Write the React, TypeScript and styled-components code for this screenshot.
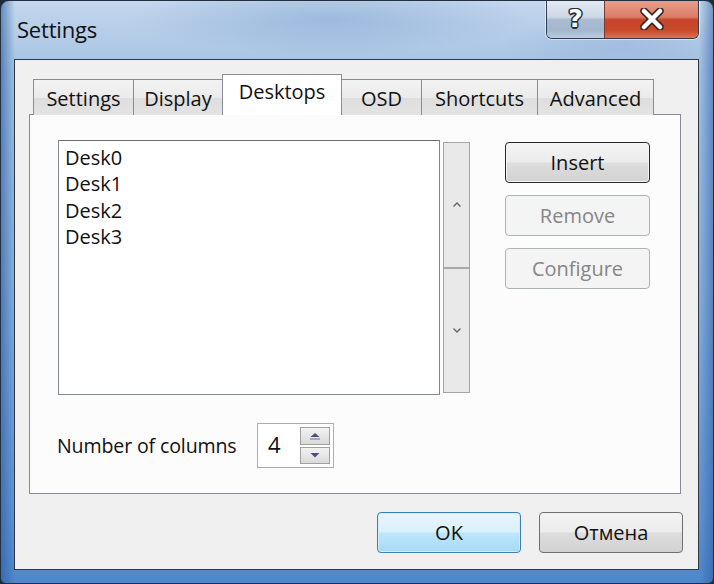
import React from "react";
import styled, { createGlobalStyle, css } from "styled-components";

const GlobalStyle = createGlobalStyle`
  html, body {
    margin: 0;
    padding: 0;
    background: #1d2a3a;
    overflow: hidden;
  }
  * {
    box-sizing: border-box;
  }
`;

const font = `"Open Sans", "Noto Sans", "DejaVu Sans", sans-serif`;

const Frame = styled.div`
  width: 714px;
  height: 584px;
  display: flex;
  flex-direction: column;
  border: 1px solid #23303f;
  border-radius: 9px 9px 6px 6px;
  overflow: hidden;
  background:
    linear-gradient(90deg, rgba(40, 90, 160, 0.6) 0px, rgba(255, 255, 255, 0) 14px,
      rgba(255, 255, 255, 0) 698px, rgba(40, 90, 160, 0.6) 714px),
    linear-gradient(180deg, #c3d7ed 0px, #b2cbe7 40px, #a3c1e4 70px, #86aedd 300px, #5f93d3 520px, #4f86cb 584px);
  font-family: ${font};
`;

const TitleBar = styled.div`
  height: 58px;
  flex: none;
  display: flex;
  justify-content: space-between;
  align-items: flex-start;
  padding-left: 16px;
  padding-right: 14px;
  background:
    radial-gradient(ellipse 200px 36px at 330px 18px, rgba(100, 140, 195, 0.35), rgba(255, 255, 255, 0)),
    radial-gradient(ellipse 120px 30px at 620px 45px, rgba(120, 150, 200, 0.25), rgba(255, 255, 255, 0));
`;

const Title = styled.div`
  padding-top: 13px;
  font-size: 22px;
  color: #111;
  letter-spacing: -0.2px;
`;

const Controls = styled.div`
  display: flex;
  margin-top: -1px;
  border: 1px solid #2f3d4e;
  border-top: none;
  border-radius: 0 0 6px 6px;
  overflow: hidden;
  box-shadow: 0 0 0 1px rgba(255, 255, 255, 0.5);
`;

const CaptionButton = styled.div<{ $close?: boolean }>`
  height: 38px;
  display: flex;
  align-items: center;
  justify-content: center;
  ${(p) =>
    p.$close
      ? css`
          width: 94px;
          background: linear-gradient(180deg, #e7a190 0%, #db7c66 45%, #c7432a 52%, #c84a2c 80%, #dc7351 100%);
          border-left: 1px solid #7a3a30;
        `
      : css`
          width: 57px;
          background: linear-gradient(180deg, #e3eaf2 0%, #cdd8e5 45%, #a9bbd0 52%, #a3b7cf 80%, #bccde0 100%);
        `}
`;

const HelpGlyph = styled.span`
  font-family: "DejaVu Sans", sans-serif;
  font-weight: bold;
  font-size: 25px;
  line-height: 1;
  margin-top: -2px;
  color: #fff;
  text-shadow: -1.5px 0 #27303c, 1.5px 0 #27303c, 0 -1.5px #27303c, 0 1.5px #27303c,
    1px 1px #27303c, -1px -1px #27303c, 1px -1px #27303c, -1px 1px #27303c;
`;

const Client = styled.div`
  flex: none;
  height: 511px;
  margin: 0 14px 0 13px;
  background: #f0f0f0;
  border: 1px solid #2d3846;
  padding: 14px 17px 0 14px;
  display: flex;
  flex-direction: column;
`;

const TabRow = styled.div`
  display: flex;
  align-items: flex-end;
  padding-left: 5px;
  height: 41px;
  position: relative;
  z-index: 1;
`;

const Tab = styled.div<{ $active?: boolean; $w: number }>`
  width: ${(p) => p.$w}px;
  font-size: 20px;
  color: #111;
  display: flex;
  justify-content: center;
  border: 1px solid #898c95;
  border-bottom: none;
  margin-left: -1px;
  ${(p) =>
    p.$active
      ? css`
          height: 41px;
          background: #fff;
          padding-top: 3px;
          position: relative;
          z-index: 2;
        `
      : css`
          height: 36px;
          background: linear-gradient(180deg, #f3f3f3 0%, #ebebeb 50%, #dedede 51%, #e3e3e3 100%);
          padding-top: 5px;
        `}
`;

const Panel = styled.div`
  height: 380px;
  margin-top: -1px;
  background: #fcfcfc;
  border: 1px solid #898c95;
  padding: 25px 0 0 28px;
  display: flex;
  flex-direction: column;
`;

const TopArea = styled.div`
  display: flex;
  align-items: flex-start;
`;

const ListBox = styled.div`
  width: 382px;
  height: 255px;
  background: #fff;
  border: 1px solid #828790;
  border-top-color: #6e6e6e;
  padding: 4px 6px;
  display: flex;
  flex-direction: column;
`;

const ListItem = styled.div`
  font-size: 20px;
  line-height: 26.3px;
  color: #111;
`;

const VScroll = styled.div`
  width: 27px;
  height: 251px;
  margin: 2px 0 0 3px;
  border: 1px solid #a4a4a4;
  display: flex;
  flex-direction: column;
`;

const VScrollHalf = styled.div<{ $bottom?: boolean }>`
  flex: 1;
  background: #e9e9e9;
  display: flex;
  align-items: center;
  justify-content: center;
  ${(p) => p.$bottom && css`border-top: 2px solid #a9a9a9;`}
`;

const ButtonColumn = styled.div`
  margin: 2px 0 0 35px;
  display: flex;
  flex-direction: column;
  gap: 12px;
`;

const PushButton = styled.div<{ $variant?: "default" | "disabled" | "focus"; $w?: number }>`
  width: ${(p) => p.$w ?? 145}px;
  height: 41px;
  border-radius: 4px;
  display: flex;
  align-items: center;
  justify-content: center;
  font-size: 20px;
  color: #111;
  border: 1px solid #707070;
  background: linear-gradient(180deg, #f4f4f4 0%, #ececec 48%, #dddddd 52%, #d2d2d2 100%);
  ${(p) =>
    p.$variant === "default" &&
    css`
      border-color: #262626;
      box-shadow: inset 0 0 0 1px #f6f6f6;
    `}
  ${(p) =>
    p.$variant === "disabled" &&
    css`
      color: #868686;
      border-color: #adb2b5;
      background: #f4f4f4;
    `}
  ${(p) =>
    p.$variant === "focus" &&
    css`
      border-color: #3c7fb1;
      background: linear-gradient(180deg, #eaf6fd 0%, #d9f0fc 48%, #bee6fd 52%, #a7d9f5 100%);
      box-shadow: inset 0 0 0 1px #d4ecf8;
    `}
`;

const ColumnsRow = styled.div`
  display: flex;
  align-items: center;
  margin-top: 28px;
  margin-left: -1px;
`;

const Label = styled.span`
  font-size: 19.6px;
  letter-spacing: -0.15px;
  color: #111;
  width: 200px;
`;

const SpinBox = styled.div`
  width: 77px;
  height: 45px;
  background: #fff;
  border: 1px solid #abadb3;
  display: flex;
  justify-content: space-between;
  padding: 3px 3px 3px 10px;
`;

const SpinValue = styled.span`
  font-size: 22px;
  line-height: 34px;
  color: #111;
`;

const SpinButtons = styled.div`
  width: 30px;
  display: flex;
  flex-direction: column;
  gap: 2px;
`;

const SpinButton = styled.div`
  flex: 1;
  border: 1px solid #a0a0a0;
  background: linear-gradient(180deg, #f2f2f2 0%, #e6e6e6 50%, #d9d9d9 100%);
  display: flex;
  align-items: center;
  justify-content: center;
`;

const Footer = styled.div`
  display: flex;
  justify-content: flex-end;
  gap: 18px;
  margin-top: 18px;
  margin-right: -2px;
`;

const Arrow = ({ up, color = "#555", w = 8 }: { up?: boolean; color?: string; w?: number }) => (
  <svg width={w} height={w / 2 + 1} viewBox="0 0 8 5">
    <path d={up ? "M0.5 4.5 L4 1 L7.5 4.5" : "M0.5 0.5 L4 4 L7.5 0.5"} fill="none" stroke={color} strokeWidth="1.4" />
  </svg>
);

const SpinArrow = ({ up }: { up?: boolean }) => (
  <svg width="12" height="8" viewBox="0 0 12 8">
    {up ? (
      <>
        <path d="M6 1 L10.5 5 L1.5 5 Z" fill="#4b4f86" />
        <path d="M1 7 L11 7" stroke="#6c70a6" strokeWidth="1" />
      </>
    ) : (
      <path d="M1.5 2 L10.5 2 L6 6.5 Z" fill="#4b4f86" />
    )}
  </svg>
);

const CloseIcon = () => (
  <svg width="26" height="22" viewBox="0 0 26 22">
    <path d="M5 3 L21 19 M21 3 L5 19" stroke="#3a2420" strokeWidth="7.5" strokeLinecap="round" />
    <path d="M5 3 L21 19 M21 3 L5 19" stroke="#ffffff" strokeWidth="4.5" strokeLinecap="round" />
  </svg>
);

const tabs = [
  { label: "Settings", w: 101 },
  { label: "Display", w: 90 },
  { label: "Desktops", w: 120, active: true },
  { label: "OSD", w: 81 },
  { label: "Shortcuts", w: 117 },
  { label: "Advanced", w: 117 },
];

const desks = ["Desk0", "Desk1", "Desk2", "Desk3"];

export default function App() {
  return (
    <>
      <GlobalStyle />
      <Frame>
        <TitleBar>
          <Title>Settings</Title>
          <Controls>
            <CaptionButton>
              <HelpGlyph>?</HelpGlyph>
            </CaptionButton>
            <CaptionButton $close>
              <CloseIcon />
            </CaptionButton>
          </Controls>
        </TitleBar>

        <Client>
          <TabRow>
            {tabs.map((t) => (
              <Tab key={t.label} $w={t.w} $active={t.active}>
                {t.label}
              </Tab>
            ))}
          </TabRow>

          <Panel>
            <TopArea>
              <ListBox>
                {desks.map((d) => (
                  <ListItem key={d}>{d}</ListItem>
                ))}
              </ListBox>
              <VScroll>
                <VScrollHalf>
                  <Arrow up color="#666" w={8} />
                </VScrollHalf>
                <VScrollHalf $bottom>
                  <Arrow color="#666" w={8} />
                </VScrollHalf>
              </VScroll>
              <ButtonColumn>
                <PushButton $variant="default">Insert</PushButton>
                <PushButton $variant="disabled">Remove</PushButton>
                <PushButton $variant="disabled">Configure</PushButton>
              </ButtonColumn>
            </TopArea>

            <ColumnsRow>
              <Label>Number of columns</Label>
              <SpinBox>
                <SpinValue>4</SpinValue>
                <SpinButtons>
                  <SpinButton>
                    <SpinArrow up />
                  </SpinButton>
                  <SpinButton>
                    <SpinArrow />
                  </SpinButton>
                </SpinButtons>
              </SpinBox>
            </ColumnsRow>
          </Panel>

          <Footer>
            <PushButton $variant="focus" $w={144}>
              OK
            </PushButton>
            <PushButton $w={144}>Отмена</PushButton>
          </Footer>
        </Client>
      </Frame>
    </>
  );
}
